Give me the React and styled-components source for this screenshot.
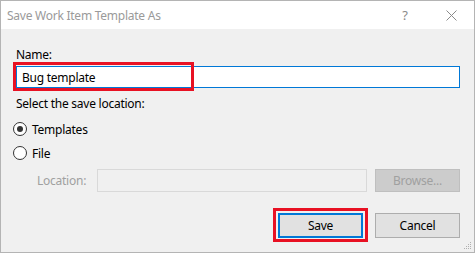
import React, { useState } from 'react';
import styled, { createGlobalStyle } from 'styled-components';

const GlobalStyle = createGlobalStyle`
  html, body {
    margin: 0;
    padding: 0;
    background: #ffffff;
  }
  * {
    box-sizing: border-box;
  }
`;

const App = () => {
  const [location, setLocation] = useState('templates');
  const [name, setName] = useState('Bug template');

  return (
    <>
      <GlobalStyle />
      <Window>
        <TitleBar>
          <Title>Save Work Item Template As</Title>
          <TitleButton>?</TitleButton>
          <TitleButton>
            <svg width="11" height="11" viewBox="0 0 11 11">
              <path d="M0.5 0.5 L10.5 10.5 M10.5 0.5 L0.5 10.5" stroke="#8a8a8a" strokeWidth="1" />
            </svg>
          </TitleButton>
        </TitleBar>

        <Body>
          <Label>Name:</Label>
          <Field>
            <NameInput value={name} onChange={(e) => setName(e.target.value)} />
            <Highlight $top={-4} $left={-3} $width={181} $height={29} />
          </Field>

          <Section>Select the save location:</Section>

          <RadioGroup>
            <RadioRow onClick={() => setLocation('templates')}>
              <Radio $checked={location === 'templates'} />
              <span>Templates</span>
            </RadioRow>
            <RadioRow onClick={() => setLocation('file')}>
              <Radio $checked={location === 'file'} />
              <span>File</span>
            </RadioRow>
          </RadioGroup>

          <LocationRow>
            <LocationLabel>Location:</LocationLabel>
            <LocationInput disabled />
            <Button disabled>Browse...</Button>
          </LocationRow>

          <Footer>
            <Field>
              <Button $primary>Save</Button>
              <Highlight $top={-5} $left={-5} $width={95} $height={34} />
            </Field>
            <Button>Cancel</Button>
          </Footer>
        </Body>

        <Grip>
          <svg width="8" height="8" viewBox="0 0 8 8">
            <rect x="6" y="0" width="1" height="1" fill="#b0b0b0" />
            <rect x="4" y="2" width="1" height="1" fill="#b0b0b0" />
            <rect x="6" y="2" width="1" height="1" fill="#b0b0b0" />
            <rect x="2" y="4" width="1" height="1" fill="#b0b0b0" />
            <rect x="4" y="4" width="1" height="1" fill="#b0b0b0" />
            <rect x="6" y="4" width="1" height="1" fill="#b0b0b0" />
            <rect x="0" y="6" width="1" height="1" fill="#b0b0b0" />
            <rect x="2" y="6" width="1" height="1" fill="#b0b0b0" />
            <rect x="4" y="6" width="1" height="1" fill="#b0b0b0" />
            <rect x="6" y="6" width="1" height="1" fill="#b0b0b0" />
          </svg>
        </Grip>
      </Window>
    </>
  );
};

// Styled Components
const Window = styled.div`
  position: relative;
  width: 475px;
  height: 253px;
  display: flex;
  flex-direction: column;
  border: 1px solid #b4b4b4;
  background-color: #f0f0f0;
  font-family: 'Noto Sans', 'Open Sans', sans-serif;
  font-size: 12px;
  letter-spacing: -0.25px;
  color: #000;
`;

const TitleBar = styled.div`
  height: 28px;
  display: flex;
  align-items: center;
  padding-left: 6px;
  background-color: #fff;
`;

const Title = styled.div`
  flex: 1;
  color: #9a9a9a;
  font-size: 12px;
`;

const TitleButton = styled.div`
  width: 46px;
  height: 28px;
  display: flex;
  align-items: center;
  justify-content: center;
  color: #8a8a8a;
  font-size: 13px;
`;

const Body = styled.div`
  display: flex;
  flex-direction: column;
  padding: 18px 14px 0 15px;
`;

const Label = styled.div`
  line-height: 16px;
  margin-bottom: 3px;
`;

const Field = styled.div`
  position: relative;
  display: flex;
`;

const NameInput = styled.input`
  width: 445px;
  height: 22px;
  padding: 0 5px;
  border: 1px solid #0078d7;
  outline: none;
  background: #fff;
  font-family: inherit;
  font-size: 12px;
  letter-spacing: inherit;
  color: #000;
`;

const Highlight = styled.div`
  position: absolute;
  top: ${(p) => p.$top}px;
  left: ${(p) => p.$left}px;
  width: ${(p) => p.$width}px;
  height: ${(p) => p.$height}px;
  border: 3px solid #e81123;
  pointer-events: none;
`;

const Section = styled.div`
  line-height: 16px;
  margin-top: 8px;
`;

const RadioGroup = styled.div`
  display: flex;
  flex-direction: column;
  margin-top: 5px;
`;

const RadioRow = styled.div`
  height: 24px;
  display: flex;
  align-items: center;
  gap: 5px;
  margin-left: -3px;
  cursor: default;
`;

const Radio = styled.span`
  width: 14px;
  height: 14px;
  border-radius: 50%;
  border: 1px solid #333;
  background: #fff;
  display: flex;
  align-items: center;
  justify-content: center;

  &::after {
    content: '';
    width: 6px;
    height: 6px;
    border-radius: 50%;
    background: #333;
    display: ${(p) => (p.$checked ? 'block' : 'none')};
  }
`;

const LocationRow = styled.div`
  display: flex;
  align-items: center;
  margin-top: 4px;
  padding-left: 21px;
`;

const LocationLabel = styled.div`
  width: 60px;
  color: #a0a0a0;
`;

const LocationInput = styled.input`
  width: 270px;
  height: 23px;
  margin-right: 8px;
  border: 1px solid #d9d9d9;
  background: #f0f0f0;
  outline: none;
`;

const Button = styled.button`
  width: 85px;
  height: ${(p) => (p.disabled ? 23 : 25)}px;
  padding: 0;
  font-family: inherit;
  font-size: 12px;
  letter-spacing: inherit;
  color: #000;
  background-color: #e1e1e1;
  border: ${(p) => (p.$primary ? '2px solid #0078d7' : '1px solid #adadad')};

  &:disabled {
    color: #a0a0a0;
    background-color: #cccccc;
    border-color: #bfbfbf;
  }
`;

const Footer = styled.div`
  display: flex;
  justify-content: flex-end;
  gap: 12px;
  margin-top: 21px;
`;

const Grip = styled.div`
  position: absolute;
  right: 2px;
  bottom: 2px;
  display: flex;
`;

export default App;
